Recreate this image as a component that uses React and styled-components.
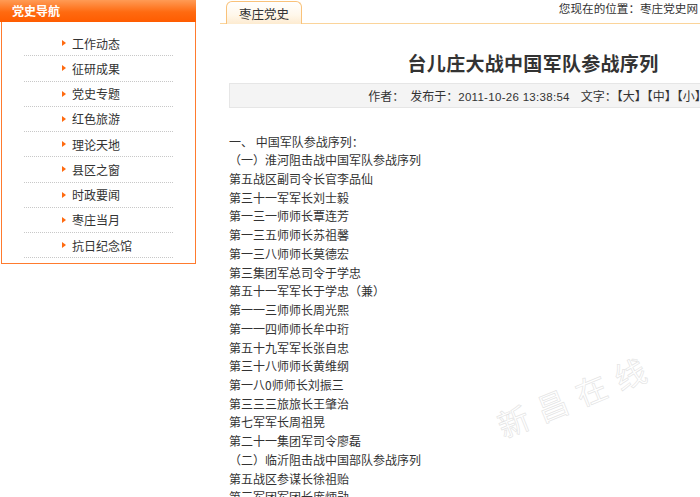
import React from "react";
import styled, { createGlobalStyle } from "styled-components";

const Global = createGlobalStyle`
  html, body {
    margin: 0;
    padding: 0;
    background: #fff;
    overflow: hidden;
  }
  body {
    font-family: "Liberation Sans", "Noto Sans CJK SC", sans-serif;
    font-size: 12px;
    color: #333;
  }
`;

const Page = styled.div`
  display: flex;
  align-items: flex-start;
  gap: 24px;
  width: 900px;
  height: 497px;
  position: relative;
`;

const Side = styled.aside`
  width: 196px;
  flex: none;
`;

const SideHead = styled.div`
  height: 22px;
  line-height: 22px;
  padding-left: 12px;
  background: linear-gradient(#ff9b55, #ff6a10 55%, #ff5c00);
  color: #fff;
  font-weight: bold;
  font-family: "Noto Sans CJK SC", sans-serif;
  font-size: 12px;
`;

const SideBox = styled.div`
  margin-left: 1px;
  border: 1px solid #ff7b2e;
  border-top: none;
  padding: 9px 22px 5px;
`;

const MenuItem = styled.div`
  box-sizing: border-box;
  height: 25.25px;
  line-height: 25px;
  border-bottom: 1px dotted #c8c8c8;
  padding-left: 38px;
  display: flex;
  align-items: center;
  gap: 6px;
  font-family: "Noto Sans CJK SC", sans-serif;
  color: #333;
`;

const Arrow = styled.span`
  width: 0;
  height: 0;
  border-top: 3.5px solid transparent;
  border-bottom: 3.5px solid transparent;
  border-left: 4px solid #ff6a10;
`;

const Main = styled.main`
  width: 626px;
  flex: none;
`;

const TopBar = styled.div`
  width: 474px;
  height: 23px;
  border-bottom: 1px solid #fbd49a;
  display: flex;
  align-items: flex-end;
  justify-content: space-between;
  padding-left: 6px;
  box-sizing: content-box;
`;

const Tab = styled.div`
  width: 74px;
  height: 22px;
  margin-bottom: -1px;
  border: 1px solid #f9c27a;
  border-bottom: none;
  border-radius: 6px 6px 0 0;
  background: linear-gradient(#ffffff, #fff7ea 60%, #fdebd0);
  text-align: center;
  line-height: 23px;
  font-family: "Noto Sans CJK SC", sans-serif;
  font-size: 12.5px;
  color: #333;
`;

const Crumb = styled.div`
  align-self: flex-start;
  line-height: 16px;
  margin-right: 2px;
  font-family: "Noto Sans CJK SC", sans-serif;
  font-size: 11.6px;
  color: #333;
`;

const Content = styled.div`
  padding: 0 9px;
`;

const Title = styled.h1`
  margin: 24px 0 5px;
  text-align: center;
  font-family: "Noto Sans CJK SC", sans-serif;
  font-size: 19px;
  font-weight: 600;
  line-height: 30px;
  color: #333;
  letter-spacing: 0.3px;
`;

const Meta = styled.div`
  box-sizing: border-box;
  height: 25px;
  line-height: 23px;
  background: #f4f4f4;
  border: 1px solid #e6e6e6;
  text-align: center;
  padding-left: 9px;
  color: #333;
`;

const MetaPart = styled.span`
  margin-left: ${(p) => p.$gap || 0}px;
  font-family: "Noto Sans CJK SC", sans-serif;
`;

const Stamp = styled.span`
  font-family: "Liberation Sans", sans-serif;
  font-size: 11.5px;
  letter-spacing: 0.3px;
`;

const Body = styled.div`
  margin-top: 24.6px;
  line-height: 18.72px;
  font-family: "Noto Sans CJK SC", sans-serif;
  color: #333;
  white-space: pre;
`;

const Watermark = styled.div`
  position: absolute;
  left: 490px;
  top: 405px;
  transform: rotate(-22deg);
  transform-origin: left top;
  font-family: "Noto Sans CJK SC", sans-serif;
  font-size: 31px;
  letter-spacing: 11px;
  color: transparent;
  -webkit-text-stroke: 0.6px #e2e2e2;
  pointer-events: none;
`;

const menu = [
  "工作动态",
  "征研成果",
  "党史专题",
  "红色旅游",
  "理论天地",
  "县区之窗",
  "时政要闻",
  "枣庄当月",
  "抗日纪念馆",
];

const lines = [
  "一、 中国军队参战序列：",
  "（一）淮河阻击战中国军队参战序列",
  "第五战区副司令长官李品仙",
  "第三十一军军长刘士毅",
  "第一三一师师长覃连芳",
  "第一三五师师长苏祖馨",
  "第一三八师师长莫德宏",
  "第三集团军总司令于学忠",
  "第五十一军军长于学忠（兼）",
  "第一一三师师长周光熙",
  "第一一四师师长牟中珩",
  "第五十九军军长张自忠",
  "第三十八师师长黄维纲",
  "第一八0师师长刘振三",
  "第三三三旅旅长王肇治",
  "第七军军长周祖晃",
  "第二十一集团军司令廖磊",
  "（二）临沂阻击战中国部队参战序列",
  "第五战区参谋长徐祖贻",
  "第三军团军团长庞炳勋",
];

export default function App() {
  return (
    <>
      <Global />
      <Page>
        <Side>
          <SideHead>党史导航</SideHead>
          <SideBox>
            {menu.map((m) => (
              <MenuItem key={m}>
                <Arrow />
                {m}
              </MenuItem>
            ))}
          </SideBox>
        </Side>
        <Main>
          <TopBar>
            <Tab>枣庄党史</Tab>
            <Crumb>您现在的位置：枣庄党史网</Crumb>
          </TopBar>
          <Content>
            <Title>台儿庄大战中国军队参战序列</Title>
            <Meta>
              <MetaPart>作者：</MetaPart>
              <MetaPart $gap={6}>
                发布于：<Stamp>2011-10-26 13:38:54</Stamp>
              </MetaPart>
              <MetaPart $gap={11}>文字：【大】【中】【小】</MetaPart>
            </Meta>
            <Body>
              {lines.map((l) => (
                <div key={l}>{l}</div>
              ))}
            </Body>
          </Content>
        </Main>
        <Watermark>新昌在线</Watermark>
      </Page>
    </>
  );
}
